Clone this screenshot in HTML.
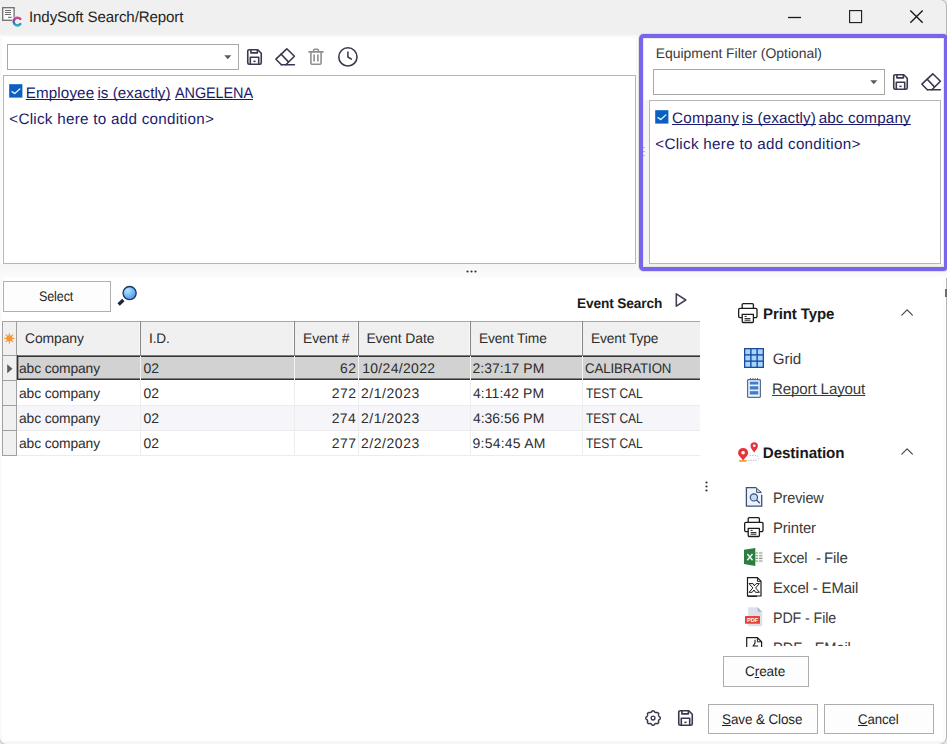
<!DOCTYPE html>
<html><head><meta charset="utf-8"><title>IndySoft Search/Report</title>
<style>
html,body{margin:0;padding:0;}
body{width:947px;height:744px;overflow:hidden;background:#fff;font-family:"Liberation Sans",sans-serif;}
#win{position:relative;width:947px;height:744px;overflow:hidden;background:#fff;}
.t{position:absolute;transform-origin:0 0;white-space:pre;text-rendering:geometricPrecision;line-height:20px;height:20px;text-decoration-thickness:1px;text-underline-offset:1px;text-decoration-skip-ink:none;}
.t u{text-decoration:underline;text-decoration-thickness:1px;text-underline-offset:1px;text-decoration-skip-ink:none;}
.b{position:absolute;box-sizing:border-box;}
svg{position:absolute;overflow:visible;}

</style></head>
<body>
<div id="win">
<!-- title bar -->
<div class="b" style="left:0;top:0;width:947px;height:38px;background:linear-gradient(#f0f0f0 0,#f0f0f0 34px,#f7f7f7 35.5px,#ffffff 38px);"></div>
<!-- window edge tints -->
<div class="b" style="left:0;top:35px;width:2px;height:709px;background:#fafafa;"></div>
<div class="b" style="left:0;top:741px;width:947px;height:3px;background:#f6f6f6;"></div>
<div class="b" style="left:943px;top:271px;width:2px;height:470px;background:#fbfbfb;"></div>
<!-- window right border + rounded corners -->
<div class="b" style="left:-1px;top:-1px;width:947.5px;height:746px;border:1px solid #b4b4b4;border-radius:0 7px 8px 7px;box-shadow:0 0 0 3px #e4e4e4;"></div>
<div class="b" style="left:945px;top:289px;width:2px;height:8px;background:#6d6d78;"></div>
<!-- left combo -->
<div class="b" style="left:7px;top:44px;width:232px;height:26px;border:1px solid #a8a8a8;background:#fff;"></div>
<svg style="left:224px;top:55px" width="8" height="5" viewBox="0 0 8 5"><path d="M0.3 0.3 H7.3 L3.8 4.2 Z" fill="#5a5a5a"/></svg>
<!-- left filter box -->
<div class="b" style="left:3px;top:75px;width:633px;height:189px;border:1px solid #b6b6b6;background:#fff;"></div>
<!-- horizontal splitter band -->
<div class="b" style="left:0;top:264px;width:947px;height:14px;background:linear-gradient(#f6f6f6,#f9f9f9 60%,#fcfcfc);"></div>
<svg style="left:466px;top:270px" width="12" height="3" viewBox="0 0 12 3"><circle cx="1.5" cy="1.5" r="1.1" fill="#333"/><circle cx="5.5" cy="1.5" r="1.1" fill="#333"/><circle cx="9.5" cy="1.5" r="1.1" fill="#333"/></svg>
<!-- vertical splitter band between filters -->
<div class="b" style="left:636px;top:38px;width:14px;height:233px;background:#f8f8f8;"></div>
<!-- equipment filter panel -->
<div class="b" style="left:643px;top:38px;width:302px;height:230px;background:#fff;"></div>
<div class="b" style="left:653px;top:69px;width:232px;height:26px;border:1px solid #a8a8a8;background:#fff;"></div>
<svg style="left:870px;top:80px" width="8" height="5" viewBox="0 0 8 5"><path d="M0.3 0.3 H7.3 L3.8 4.2 Z" fill="#5a5a5a"/></svg>
<div class="b" style="left:649px;top:100px;width:292px;height:164px;border:1px solid #b6b6b6;background:#fff;"></div>
<div class="b" style="left:643px;top:100px;width:6px;height:164px;background:#f5f5f3;"></div>
<div class="b" style="left:643px;top:264px;width:302px;height:3px;background:#f1f1ed;"></div>
<svg style="left:642px;top:146px" width="3" height="12" viewBox="0 0 3 12"><circle cx="1.6" cy="1.5" r="0.75" fill="#444"/><circle cx="1.6" cy="5.5" r="0.75" fill="#444"/><circle cx="1.6" cy="9.4" r="0.75" fill="#444"/></svg>
<!-- purple highlight -->
<div class="b" style="left:639px;top:34px;width:309px;height:237px;border:4px solid #7866ea;border-radius:4.5px;box-shadow:0 0 0 1px rgba(214,214,208,.7),inset 0 0 0 1px rgba(226,226,220,.7);"></div>
<!-- select button -->
<div class="b" style="left:3px;top:281px;width:108px;height:31px;border:1px solid #b0b0b0;background:#fdfdfd;"></div>
<!-- grid -->
<div id="grid" class="b" style="left:2px;top:321px;width:698px;height:135px;overflow:hidden;">
  <!-- header -->
  <div class="b" style="left:0;top:0;width:699px;height:35px;background:#f0f0f0;border-top:1px solid #a8a8a8;"></div>
  <!-- indicator column -->
  <div class="b" style="left:0;top:0;width:15px;height:135px;background:#f0f0f0;border-left:1px solid #a0a0a0;border-right:1px solid #a0a0a0;border-top:1px solid #a8a8a8;border-bottom:1px solid #a0a0a0;"></div>
  <div class="b" style="left:0;top:34px;width:15px;height:1px;background:#a0a0a0;"></div>
  <div class="b" style="left:0;top:59px;width:15px;height:1px;background:#a0a0a0;"></div>
  <div class="b" style="left:0;top:84px;width:15px;height:1px;background:#a0a0a0;"></div>
  <div class="b" style="left:0;top:109px;width:15px;height:1px;background:#a0a0a0;"></div>
  <!-- row backgrounds -->
  <div class="b" style="left:15px;top:35px;width:684px;height:24px;background:#d2d2d2;"></div>
  <div class="b" style="left:15px;top:85px;width:684px;height:25px;background:#f5f5fa;"></div>
  <!-- row lines -->
  <div class="b" style="left:15px;top:84px;width:684px;height:1px;background:#ececec;"></div>
  <div class="b" style="left:15px;top:109px;width:684px;height:1px;background:#ececec;"></div>
  <div class="b" style="left:15px;top:134px;width:684px;height:1px;background:#ececec;"></div>
  <!-- column lines body -->
  <div class="b" style="left:138px;top:59px;width:1px;height:76px;background:#ededed;"></div>
  <div class="b" style="left:292px;top:59px;width:1px;height:76px;background:#ededed;"></div>
  <div class="b" style="left:356px;top:59px;width:1px;height:76px;background:#ededed;"></div>
  <div class="b" style="left:468px;top:59px;width:1px;height:76px;background:#ededed;"></div>
  <div class="b" style="left:580px;top:59px;width:1px;height:76px;background:#ededed;"></div>
  <!-- column lines header -->
  <div class="b" style="left:137px;top:1px;width:1px;height:34px;background:#fafafa;"></div>
  <div class="b" style="left:138px;top:0;width:1px;height:35px;background:#868686;"></div>
  <div class="b" style="left:291px;top:1px;width:1px;height:34px;background:#fafafa;"></div>
  <div class="b" style="left:292px;top:0;width:1px;height:35px;background:#868686;"></div>
  <div class="b" style="left:355px;top:1px;width:1px;height:34px;background:#fafafa;"></div>
  <div class="b" style="left:356px;top:0;width:1px;height:35px;background:#868686;"></div>
  <div class="b" style="left:467px;top:1px;width:1px;height:34px;background:#fafafa;"></div>
  <div class="b" style="left:468px;top:0;width:1px;height:35px;background:#868686;"></div>
  <div class="b" style="left:579px;top:1px;width:1px;height:34px;background:#fafafa;"></div>
  <div class="b" style="left:580px;top:0;width:1px;height:35px;background:#868686;"></div>
  <!-- selected row dark frame -->
  <div class="b" style="left:15px;top:34px;width:683px;height:1px;background:#7c7c7c;"></div>
  <div class="b" style="left:15px;top:35px;width:683px;height:1px;background:#333;"></div>
  <div class="b" style="left:15px;top:57px;width:683px;height:1px;background:#7e7e7e;"></div>
  <div class="b" style="left:15px;top:58px;width:683px;height:1px;background:#333;"></div>
  <div class="b" style="left:15px;top:34px;width:1px;height:25px;background:#333;"></div>
  <div class="b" style="left:16px;top:36px;width:1px;height:21px;background:#9a9a9a;"></div>
  <!-- selected row column separators (white-ish) -->
  <div class="b" style="left:138px;top:35px;width:1px;height:24px;background:#f2f2f2;"></div>
  <div class="b" style="left:292px;top:35px;width:1px;height:24px;background:#f2f2f2;"></div>
  <div class="b" style="left:356px;top:35px;width:1px;height:24px;background:#f2f2f2;"></div>
  <div class="b" style="left:468px;top:35px;width:1px;height:24px;background:#f2f2f2;"></div>
  <div class="b" style="left:580px;top:35px;width:1px;height:24px;background:#f2f2f2;"></div>
</div>
<!-- vertical dots right of grid -->
<svg style="left:705px;top:481px" width="3" height="12" viewBox="0 0 3 12"><circle cx="1.5" cy="1.5" r="1.1" fill="#333"/><circle cx="1.5" cy="5.5" r="1.1" fill="#333"/><circle cx="1.5" cy="9.5" r="1.1" fill="#333"/></svg>
<!-- buttons -->
<div class="b" style="left:723px;top:656px;width:86px;height:31px;border:1px solid #adadad;background:#fdfdfd;"></div>
<div class="b" style="left:708px;top:704px;width:110px;height:30px;border:1px solid #adadad;background:#fdfdfd;"></div>
<div class="b" style="left:824px;top:704px;width:110px;height:30px;border:1px solid #adadad;background:#fdfdfd;"></div>

<!-- ===== app icon ===== -->
<svg style="left:0;top:0" width="32" height="32" viewBox="0 0 32 32">
  <defs><linearGradient id="cg" x1="0" y1="0" x2="0" y2="1"><stop offset="0" stop-color="#e8408c"/><stop offset="0.45" stop-color="#6a4a9c"/><stop offset="1" stop-color="#18b8c0"/></linearGradient></defs>
  <rect x="2.7" y="7.7" width="11.4" height="12.6" fill="#fafafa" stroke="#6e6e6e" stroke-width="1.3"/>
  <path d="M5 10.5H11M5 12.5H11M5 14.5H11" stroke="#5a5a5a" stroke-width="0.9" fill="none"/>
  <path d="M8 17.3H11.7" stroke="#2a7a84" stroke-width="1" fill="none"/>
  <path d="M20.3 18.9 A3.8 3.9 0 1 0 20.3 24.2" stroke="#f6f0f8" stroke-width="3.6" fill="none" stroke-linecap="round"/><path d="M20.3 18.9 A3.8 3.9 0 1 0 20.3 24.2" stroke="url(#cg)" stroke-width="2.5" fill="none" stroke-linecap="round"/>
</svg>
<!-- ===== window buttons ===== -->
<svg style="left:780px;top:0" width="160" height="35" viewBox="780 0 160 35">
  <path d="M788 17.5H801" stroke="#1a1a1a" stroke-width="1.3"/>
  <rect x="849.6" y="10.6" width="12" height="12" fill="none" stroke="#1a1a1a" stroke-width="1.1"/>
  <path d="M910.3 10.4L922.7 22.8M922.7 10.4L910.3 22.8" stroke="#1a1a1a" stroke-width="1.4"/>
</svg>
<!-- ===== save icon (def) ===== -->
<svg width="0" height="0" style="left:0;top:0"><defs>
  <g id="save" fill="none" stroke="#3a384f" stroke-width="1.6" stroke-linejoin="round">
    <path d="M2.2 0.75H10.8L14.25 4.2V13.8A1.45 1.45 0 0 1 12.8 15.25H2.2A1.45 1.45 0 0 1 0.75 13.8V2.2A1.45 1.45 0 0 1 2.2 0.75Z"/>
    <path d="M3.9 0.9V3.9H10.4V0.9"/>
    <path d="M3.3 15.1V8.3H11.7V15.1"/>
    <rect x="6.4" y="11.6" width="2.2" height="1.5" fill="#3a384f" stroke="none"/>
  </g>
  <g id="eraser" fill="none" stroke="#3a384f" stroke-width="1.6" stroke-linejoin="round" stroke-linecap="round">
    <path d="M6.4 16.7L0.9 11.2L11.8 0.8L19.4 8.2L10.9 16.7"/>
    <path d="M6.2 6.2L13.2 13.6"/>
    <path d="M6.4 16.7H19.4"/>
  </g>
  <g id="printer" fill="none" stroke="#1c1c1c" stroke-width="1.3" stroke-linejoin="round">
    <path d="M4.2 5.3V1.6A1 1 0 0 1 5.2 0.65H14.4A1 1 0 0 1 15.4 1.6V5.3"/>
    <path d="M4.2 14.6H1.9A1.3 1.3 0 0 1 0.65 13.3V6.6A1.3 1.3 0 0 1 1.9 5.3H17.7A1.3 1.3 0 0 1 19 6.6V13.3A1.3 1.3 0 0 1 17.7 14.6H15.4"/>
    <path d="M4.2 11.3H15.4V18.6A0.9 0.9 0 0 1 14.5 19.5H5.1A0.9 0.9 0 0 1 4.2 18.6Z"/>
    <path d="M6.6 13.4H8.6M6.6 15.6H12.4M6.6 17.2H12.4" stroke-width="1"/>
  </g>
  <g id="chev" fill="none" stroke="#454545" stroke-width="1.15" stroke-linecap="round" stroke-linejoin="round">
    <path d="M0.8 6.2L6.1 0.9L11.4 6.2"/>
  </g>
</defs></svg>
<!-- left toolbar -->
<svg style="left:246.6px;top:48.8px" width="15" height="16" viewBox="0 0 15 16"><use href="#save"/></svg>
<svg style="left:274.9px;top:47.8px" width="20" height="18" viewBox="0 0 20 18"><use href="#eraser"/></svg>
<!-- trash -->
<svg style="left:308px;top:48px" width="16" height="18" viewBox="0 0 16 18">
  <g fill="none" stroke="#909090" stroke-width="1.6" stroke-linejoin="round" stroke-linecap="round">
    <path d="M1 3.9H15"/>
    <path d="M5.6 3.7V2.4A1.2 1.2 0 0 1 6.8 1.2H9.2A1.2 1.2 0 0 1 10.4 2.4V3.7"/>
    <path d="M2.9 4.2V15A1.2 1.2 0 0 0 4.1 16.2H11.9A1.2 1.2 0 0 0 13.1 15V4.2"/>
    <path d="M6.1 7V13M9.9 7V13"/>
  </g>
</svg>
<!-- clock -->
<svg style="left:337px;top:46px" width="22" height="22" viewBox="0 0 22 22">
  <circle cx="10.9" cy="10.9" r="9.1" fill="none" stroke="#3a384f" stroke-width="1.6"/>
  <path d="M10.9 6V11L14.4 13.2" fill="none" stroke="#3a384f" stroke-width="1.5" stroke-linecap="round" stroke-linejoin="round"/>
</svg>
<!-- right toolbar -->
<svg style="left:892.8px;top:73.8px" width="15" height="16" viewBox="0 0 15 16"><use href="#save"/></svg>
<svg style="left:921.2px;top:72.8px" width="20" height="18" viewBox="0 0 20 18"><use href="#eraser"/></svg>
<!-- checkboxes -->
<svg style="left:9px;top:84px" width="14" height="14" viewBox="0 0 14 14"><rect x="0.2" y="0.2" width="13.2" height="13.4" fill="#0b5fc2"/><path d="M3 7.6L5.8 9.6L10.8 5" fill="none" stroke="#d8f0ff" stroke-width="1.3" stroke-linecap="round" stroke-linejoin="round"/></svg>
<svg style="left:655.3px;top:109.8px" width="14" height="14" viewBox="0 0 14 14"><rect x="0.2" y="0.2" width="13.2" height="13.4" fill="#0b5fc2"/><path d="M3 7.6L5.8 9.6L10.8 5" fill="none" stroke="#d8f0ff" stroke-width="1.3" stroke-linecap="round" stroke-linejoin="round"/></svg>
<!-- magnifier -->
<svg style="left:114px;top:282px" width="28" height="28" viewBox="114 282 28 28">
  <defs><radialGradient id="lens" cx="0.35" cy="0.3" r="0.8"><stop offset="0" stop-color="#b4e6ff"/><stop offset="0.6" stop-color="#6cb2f6"/><stop offset="1" stop-color="#4f8fe8"/></radialGradient></defs>
  <path d="M123.4 300L118.6 304.5" stroke="#23233f" stroke-width="3.4" stroke-linecap="butt"/>
  <circle cx="129.6" cy="293.1" r="6.6" fill="url(#lens)" stroke="#1c3560" stroke-width="1.3"/>
</svg>
<!-- play triangle -->
<svg style="left:674px;top:291px" width="16" height="18" viewBox="674 291 16 18">
  <path d="M676.3 293.8V306.2L685.8 300Z" fill="none" stroke="#434158" stroke-width="1.6" stroke-linejoin="round"/>
</svg>
<!-- grid row indicator icons -->
<svg style="left:3px;top:332px" width="13" height="13" viewBox="0 0 13 13">
  <g stroke="#f5a043" stroke-width="1.25" stroke-linecap="round"><path d="M6.4 1.5V11.1M1.6 6.3H11.2M3 2.9L9.8 9.7M9.8 2.9L3 9.7"/></g>
  <circle cx="6.4" cy="6.3" r="3.1" fill="#f5963a"/>
</svg>
<svg style="left:7px;top:364px" width="6" height="10" viewBox="0 0 6 10"><path d="M0.2 0.3L5.5 4.8L0.2 9.3Z" fill="#5c5c5c"/></svg>
<!-- print type header -->
<svg style="left:737.7px;top:302.7px" width="20" height="21" viewBox="0 0 20 21"><use href="#printer"/></svg>
<svg style="left:900.5px;top:308.7px" width="13" height="7" viewBox="0 0 13 7"><use href="#chev"/></svg>
<!-- grid icon -->
<svg style="left:744px;top:348px" width="20" height="20" viewBox="0 0 20 20">
  <rect x="0" y="0" width="20" height="20" fill="#1d4a9c"/>
  <g fill="#a4d6ff"><rect x="1.3" y="1.3" width="4.87" height="4.87"/><rect x="7.57" y="1.3" width="4.87" height="4.87"/><rect x="13.83" y="1.3" width="4.87" height="4.87"/><rect x="1.3" y="7.57" width="4.87" height="4.87"/><rect x="7.57" y="7.57" width="4.87" height="4.87"/><rect x="13.83" y="7.57" width="4.87" height="4.87"/><rect x="1.3" y="13.83" width="4.87" height="4.87"/><rect x="7.57" y="13.83" width="4.87" height="4.87"/><rect x="13.83" y="13.83" width="4.87" height="4.87"/></g>
</svg>
<!-- report layout icon -->
<svg style="left:746px;top:377px" width="16" height="22" viewBox="746 377 16 22">
  <rect x="747.6" y="379.6" width="12.8" height="17.8" rx="0.8" fill="#eef7ff" stroke="#5b6d8c" stroke-width="1.25"/>
  <path d="M750.5 378V379.6M752.9 378V379.6M755.2 378V379.6M757.5 378V379.6" stroke="#4a5a78" stroke-width="0.9"/>
  <rect x="749.4" y="381.4" width="9.2" height="3.4" fill="#b4d8fa"/><rect x="749.4" y="385.9" width="9.2" height="3.9" fill="#b4d8fa"/><rect x="749.4" y="390.8" width="9.2" height="4" fill="#b4d8fa"/><rect x="749.9" y="381.8" width="8.3" height="2.6" fill="#447cc8"/>
  <rect x="749.9" y="386.3" width="8.3" height="3.1" fill="#447cc8"/>
  <rect x="749.9" y="391.2" width="8.3" height="3.2" fill="#447cc8"/>
</svg>
<!-- destination header -->
<svg style="left:736px;top:440px" width="24" height="24" viewBox="736 440 24 24">
  <path d="M749.5 455.4H756A2.4 2.4 0 0 1 756 460.3H746.5" fill="none" stroke="#b4c4d6" stroke-width="1" stroke-dasharray="1.6 1"/>
  <path d="M739.8 460.9H746" stroke="#f5a030" stroke-width="1.6" stroke-linecap="round"/>
  <path d="M743.1 460.4C741.2 457.6 738.1 455.6 738.1 452.9A5 5 0 0 1 748.1 452.9C748.1 455.6 745 457.6 743.1 460.4Z" fill="#e8323c"/>
  <circle cx="743.1" cy="452.7" r="1.8" fill="#fff"/>
  <path d="M754.2 452.4C752.8 450.2 750.5 448.3 750.5 445.9A3.7 3.7 0 0 1 757.9 445.9C757.9 448.3 755.6 450.2 754.2 452.4Z" fill="#e8323c"/>
  <circle cx="754.2" cy="445.7" r="1.3" fill="#fff"/>
</svg>
<svg style="left:900.5px;top:448px" width="13" height="7" viewBox="0 0 13 7"><use href="#chev"/></svg>
<!-- preview icon -->
<svg style="left:744px;top:485px" width="22" height="24" viewBox="744 485 22 24">
  <path d="M746.4 487.7H756.6L761.7 492.4V506.2H746.4Z" fill="#eaf3ff" stroke="none"/>
  <path d="M761.7 494.8V506.2H746.4V487.7H756.4" fill="none" stroke="#3c5272" stroke-width="1.3" stroke-linejoin="miter"/>
  <path d="M756.6 488.2L761.4 492.4H756.6Z" fill="#cfe0f6" stroke="#3c5272" stroke-width="1" stroke-linejoin="round"/>
  <circle cx="753.9" cy="497.4" r="3.6" fill="#c6dcf6" stroke="#3c5272" stroke-width="1.2"/>
  <path d="M756.6 500.1L759.4 502.7" stroke="#3c5272" stroke-width="1.3" stroke-linecap="round"/>
</svg>
<!-- printer icon -->
<svg style="left:743.6px;top:516.9px" width="20" height="21" viewBox="0 0 20 21"><use href="#printer"/></svg>
<!-- excel file icon -->
<svg style="left:742px;top:546px" width="24" height="22" viewBox="742 546 24 22">
  <rect x="755" y="550.4" width="7.8" height="13" fill="#f6faf6"/>
  <path d="M755.5 553H758M759 553H762.4M755.5 555.7H758M759 555.7H762.4M755.5 558.4H758M759 558.4H762.4M755.5 561H758M759 561H762.4" stroke="#7a9a84" stroke-width="1.1"/>
  <path d="M744 549.7L755.3 547.9V566L744 564Z" fill="#2c7d3f"/>
  <path d="M747.3 554L752.5 560.2M752.5 554L747.3 560.2" stroke="#e8f6ea" stroke-width="1.5"/>
</svg>
<!-- excel email icon -->
<svg style="left:745px;top:575px" width="20" height="24" viewBox="745 575 20 24">
  <path d="M747.5 577.7H757.4L761 581.3V596H747.5Z" fill="#fff" stroke="#1c1c1c" stroke-width="1.2" stroke-linejoin="miter"/>
  <path d="M757.4 577.9V581.3H760.8" fill="none" stroke="#1c1c1c" stroke-width="1"/>
  <path d="M748 596.3H757" stroke="#1c1c1c" stroke-width="1.3"/>
  <path d="M749 583.6H753.1L754.3 585.8L756.1 583.6H759.4L755.6 587.9L759.4 592.3H755.5L754 590L752.2 592.3H749L752.9 587.9Z" fill="#fff" stroke="#1c1c1c" stroke-width="1" stroke-linejoin="miter"/>
</svg>
<!-- pdf file icon -->
<svg style="left:744px;top:606px" width="20" height="22" viewBox="744 606 20 22">
  <path d="M748.2 607.3H757.6L762.2 611.8V626.2H748.2Z" fill="#dde0ea"/>
  <path d="M757.6 607.3L762.2 611.8H757.6Z" fill="#aeb6c8"/>
  <rect x="745" y="616.1" width="15" height="7.7" rx="0.6" fill="#e2463a"/>
  <text x="752.5" y="622.2" font-family="Liberation Sans, sans-serif" font-weight="700" font-size="5.6" fill="#fff" text-anchor="middle">PDF</text>
</svg>
<!-- pdf email icon (clipped) -->
<svg style="left:745px;top:635px" width="20" height="11" viewBox="745 635 20 11">
  <path d="M746.7 647V637.7H757.4L761.6 641.8V647" fill="#fff" stroke="#1c1c1c" stroke-width="1.2" stroke-linejoin="miter"/>
  <path d="M757.4 637.9V641.8H761.4" fill="none" stroke="#1c1c1c" stroke-width="1"/>
  <path d="M755 639.8V643L753.2 646H758.2" fill="none" stroke="#1c1c1c" stroke-width="1.1"/>
</svg>
<!-- bottom gear + save -->
<svg style="left:644px;top:709px" width="18" height="18" viewBox="0 0 18 18">
  <path d="M9.05 1.85L9.40 1.87L9.75 1.95L10.07 2.15L10.35 2.53L10.59 2.92L10.84 3.15L11.11 3.30L11.38 3.42L11.66 3.53L11.96 3.61L12.30 3.63L12.74 3.52L13.21 3.45L13.58 3.53L13.88 3.72L14.14 3.96L14.38 4.22L14.57 4.52L14.65 4.89L14.58 5.36L14.47 5.80L14.49 6.14L14.57 6.44L14.68 6.72L14.80 6.99L14.95 7.26L15.18 7.51L15.57 7.75L15.95 8.03L16.15 8.35L16.23 8.70L16.25 9.05L16.23 9.40L16.15 9.75L15.95 10.07L15.57 10.35L15.18 10.59L14.95 10.84L14.80 11.11L14.68 11.38L14.57 11.66L14.49 11.96L14.47 12.30L14.58 12.74L14.65 13.21L14.57 13.58L14.38 13.88L14.14 14.14L13.88 14.38L13.58 14.57L13.21 14.65L12.74 14.58L12.30 14.47L11.96 14.49L11.66 14.57L11.38 14.68L11.11 14.80L10.84 14.95L10.59 15.18L10.35 15.57L10.07 15.95L9.75 16.15L9.40 16.23L9.05 16.25L8.70 16.23L8.35 16.15L8.03 15.95L7.75 15.57L7.51 15.18L7.26 14.95L6.99 14.80L6.72 14.68L6.44 14.57L6.14 14.49L5.80 14.47L5.36 14.58L4.89 14.65L4.52 14.57L4.22 14.38L3.96 14.14L3.72 13.88L3.53 13.58L3.45 13.21L3.52 12.74L3.63 12.30L3.61 11.96L3.53 11.66L3.42 11.38L3.30 11.11L3.15 10.84L2.92 10.59L2.53 10.35L2.15 10.07L1.95 9.75L1.87 9.40L1.85 9.05L1.87 8.70L1.95 8.35L2.15 8.03L2.53 7.75L2.92 7.51L3.15 7.26L3.30 6.99L3.42 6.72L3.53 6.44L3.61 6.14L3.63 5.80L3.52 5.36L3.45 4.89L3.53 4.52L3.72 4.22L3.96 3.96L4.22 3.72L4.52 3.53L4.89 3.45L5.36 3.52L5.80 3.63L6.14 3.61L6.44 3.53L6.72 3.42L6.99 3.30L7.26 3.15L7.51 2.92L7.75 2.53L8.03 2.15L8.35 1.95L8.70 1.87L9.05 1.85Z" fill="none" stroke="#3a384f" stroke-width="1.5" stroke-linejoin="round"/>
  <circle cx="9.05" cy="9.05" r="1.9" fill="none" stroke="#3a384f" stroke-width="1.4"/>
</svg>
<svg style="left:677.7px;top:710px" width="15" height="16" viewBox="0 0 15 16"><use href="#save"/></svg>

<div class="t" style="left:28.53px;top:8.00px;font-size:15.2px;letter-spacing:-0.120px;color:#1f1f1f;transform:scaleX(0.9942);">IndySoft Search/Report</div>
<div class="t" style="left:25.81px;top:84.00px;font-size:15.2px;letter-spacing:0.106px;color:#1b1b6b;text-decoration:underline;">Employee</div>
<div class="t" style="left:97.40px;top:84.00px;font-size:15.2px;letter-spacing:0.055px;color:#1b1b6b;text-decoration:underline;">is (exactly)</div>
<div class="t" style="left:174.50px;top:84.00px;font-size:15.2px;letter-spacing:-0.120px;color:#1b1b6b;transform:scaleX(0.9533);text-decoration:underline;">ANGELENA</div>
<div class="t" style="left:9.25px;top:110.00px;font-size:15.2px;letter-spacing:0.281px;color:#1b1b6b;">&lt;Click here to add condition&gt;</div>
<div class="t" style="left:655.77px;top:43.00px;font-size:13.95px;letter-spacing:-0.016px;color:#3a3a3a;">Equipment Filter (Optional)</div>
<div class="t" style="left:672.05px;top:109.00px;font-size:15.2px;letter-spacing:0.296px;color:#1b1b6b;text-decoration:underline;">Company</div>
<div class="t" style="left:742.00px;top:109.00px;font-size:15.2px;letter-spacing:0.119px;color:#1b1b6b;text-decoration:underline;">is (exactly)</div>
<div class="t" style="left:818.67px;top:109.00px;font-size:15.2px;letter-spacing:0.160px;color:#1b1b6b;text-decoration:underline;">abc company</div>
<div class="t" style="left:655.25px;top:135.00px;font-size:15.2px;letter-spacing:0.299px;color:#1b1b6b;">&lt;Click here to add condition&gt;</div>
<div class="t" style="left:39.24px;top:286.00px;font-size:13.95px;letter-spacing:-0.120px;color:#1f1f1f;transform:scaleX(0.8991);">Select</div>
<div class="t" style="left:576.94px;top:293.00px;font-size:13.95px;letter-spacing:-0.120px;color:#1a1a1a;font-weight:700;transform:scaleX(0.9806);">Event Search</div>
<div class="t" style="left:24.61px;top:328.00px;font-size:13.95px;letter-spacing:-0.120px;color:#2c2c2c;transform:scaleX(0.9997);">Company</div>
<div class="t" style="left:148.88px;top:328.00px;font-size:13.95px;letter-spacing:-0.120px;color:#2c2c2c;transform:scaleX(0.9767);">I.D.</div>
<div class="t" style="left:302.68px;top:328.00px;font-size:13.95px;letter-spacing:-0.120px;color:#2c2c2c;transform:scaleX(0.9989);">Event #</div>
<div class="t" style="left:366.38px;top:328.00px;font-size:13.95px;letter-spacing:-0.102px;color:#2c2c2c;">Event Date</div>
<div class="t" style="left:478.69px;top:328.00px;font-size:13.95px;letter-spacing:-0.120px;color:#2c2c2c;transform:scaleX(0.9881);">Event Time</div>
<div class="t" style="left:590.69px;top:328.00px;font-size:13.95px;letter-spacing:-0.120px;color:#2c2c2c;transform:scaleX(0.9871);">Event Type</div>
<div class="t" style="left:18.84px;top:358.00px;font-size:13.95px;letter-spacing:-0.120px;color:#2c2c2c;transform:scaleX(0.9923);">abc company</div>
<div class="t" style="left:143.50px;top:358.00px;font-size:13.95px;letter-spacing:0.080px;color:#2c2c2c;">02</div>
<div class="t" style="left:339.91px;top:358.00px;font-size:13.95px;letter-spacing:0.567px;color:#2c2c2c;">62</div>
<div class="t" style="left:362.14px;top:358.00px;font-size:13.95px;letter-spacing:0.349px;color:#2c2c2c;">10/24/2022</div>
<div class="t" style="left:472.51px;top:358.00px;font-size:13.95px;letter-spacing:0.052px;color:#2c2c2c;">2:37:17 PM</div>
<div class="t" style="left:585.14px;top:358.00px;font-size:13.95px;letter-spacing:-0.120px;color:#2c2c2c;transform:scaleX(0.9533);">CALIBRATION</div>
<div class="t" style="left:18.84px;top:383.00px;font-size:13.95px;letter-spacing:-0.120px;color:#2c2c2c;transform:scaleX(0.9923);">abc company</div>
<div class="t" style="left:143.50px;top:383.00px;font-size:13.95px;letter-spacing:0.080px;color:#2c2c2c;">02</div>
<div class="t" style="left:331.81px;top:383.00px;font-size:13.95px;letter-spacing:0.455px;color:#2c2c2c;">272</div>
<div class="t" style="left:360.91px;top:383.00px;font-size:13.95px;letter-spacing:0.580px;color:#2c2c2c;">2/1/2023</div>
<div class="t" style="left:472.89px;top:383.00px;font-size:13.95px;letter-spacing:0.103px;color:#2c2c2c;">4:11:42 PM</div>
<div class="t" style="left:585.53px;top:383.00px;font-size:13.95px;letter-spacing:-0.120px;color:#2c2c2c;transform:scaleX(0.8641);">TEST CAL</div>
<div class="t" style="left:18.84px;top:408.00px;font-size:13.95px;letter-spacing:-0.120px;color:#2c2c2c;transform:scaleX(0.9923);">abc company</div>
<div class="t" style="left:143.50px;top:408.00px;font-size:13.95px;letter-spacing:0.080px;color:#2c2c2c;">02</div>
<div class="t" style="left:331.81px;top:408.00px;font-size:13.95px;letter-spacing:0.298px;color:#2c2c2c;">274</div>
<div class="t" style="left:360.91px;top:408.00px;font-size:13.95px;letter-spacing:0.580px;color:#2c2c2c;">2/1/2023</div>
<div class="t" style="left:472.89px;top:408.00px;font-size:13.95px;letter-spacing:0.010px;color:#2c2c2c;">4:36:56 PM</div>
<div class="t" style="left:585.53px;top:408.00px;font-size:13.95px;letter-spacing:-0.120px;color:#2c2c2c;transform:scaleX(0.8641);">TEST CAL</div>
<div class="t" style="left:18.84px;top:433.00px;font-size:13.95px;letter-spacing:-0.120px;color:#2c2c2c;transform:scaleX(0.9923);">abc company</div>
<div class="t" style="left:143.50px;top:433.00px;font-size:13.95px;letter-spacing:0.080px;color:#2c2c2c;">02</div>
<div class="t" style="left:331.81px;top:433.00px;font-size:13.95px;letter-spacing:0.455px;color:#2c2c2c;">277</div>
<div class="t" style="left:360.91px;top:433.00px;font-size:13.95px;letter-spacing:0.580px;color:#2c2c2c;">2/2/2023</div>
<div class="t" style="left:472.57px;top:433.00px;font-size:13.95px;letter-spacing:0.253px;color:#2c2c2c;">9:54:45 AM</div>
<div class="t" style="left:585.53px;top:433.00px;font-size:13.95px;letter-spacing:-0.120px;color:#2c2c2c;transform:scaleX(0.8641);">TEST CAL</div>
<div class="t" style="left:763.01px;top:305.00px;font-size:15.2px;letter-spacing:-0.120px;color:#1a1a1a;font-weight:700;transform:scaleX(0.9902);">Print Type</div>
<div class="t" style="left:772.65px;top:350.00px;font-size:15.2px;letter-spacing:-0.037px;color:#3a3a3a;">Grid</div>
<div class="t" style="left:772.42px;top:380.00px;font-size:15.2px;letter-spacing:-0.120px;color:#3a3a3a;transform:scaleX(0.9930);text-decoration:underline;">Report Layout</div>
<div class="t" style="left:762.80px;top:444.00px;font-size:15.2px;letter-spacing:-0.095px;color:#1a1a1a;font-weight:700;">Destination</div>
<div class="t" style="left:772.87px;top:489.00px;font-size:15.2px;letter-spacing:-0.120px;color:#3a3a3a;transform:scaleX(0.9534);">Preview</div>
<div class="t" style="left:772.84px;top:519.00px;font-size:15.2px;letter-spacing:-0.120px;color:#3a3a3a;transform:scaleX(0.9763);">Printer</div>
<div class="t" style="left:772.88px;top:549.00px;font-size:15.2px;letter-spacing:-0.120px;color:#3a3a3a;transform:scaleX(0.9421);">Excel</div>
<div class="t" style="left:815.98px;top:549.00px;font-size:15.2px;letter-spacing:0.000px;color:#3a3a3a;">-</div>
<div class="t" style="left:824.32px;top:549.00px;font-size:15.2px;letter-spacing:-0.120px;color:#3a3a3a;transform:scaleX(0.9954);">File</div>
<div class="t" style="left:772.84px;top:579.00px;font-size:15.2px;letter-spacing:-0.120px;color:#3a3a3a;transform:scaleX(0.9782);">Excel - EMail</div>
<div class="t" style="left:772.88px;top:609.00px;font-size:15.2px;letter-spacing:-0.120px;color:#3a3a3a;transform:scaleX(0.9406);">PDF - File</div>
<div class="t" style="left:772.85px;top:639.00px;font-size:15.2px;letter-spacing:-0.120px;color:#3a3a3a;transform:scaleX(0.9653);height:6.50px;overflow:hidden;">PDF - EMail</div>
<div class="t" style="left:744.93px;top:661.00px;font-size:13.95px;letter-spacing:-0.120px;color:#1f1f1f;transform:scaleX(0.9773);">C<u>r</u>eate</div>
<div class="t" style="left:722.20px;top:709.00px;font-size:13.95px;letter-spacing:-0.120px;color:#1f1f1f;transform:scaleX(0.9671);"><u>S</u>ave &amp; Close</div>
<div class="t" style="left:858.05px;top:709.00px;font-size:13.95px;letter-spacing:-0.120px;color:#1f1f1f;transform:scaleX(0.9485);"><u>C</u>ancel</div>
</div>
</body></html>
